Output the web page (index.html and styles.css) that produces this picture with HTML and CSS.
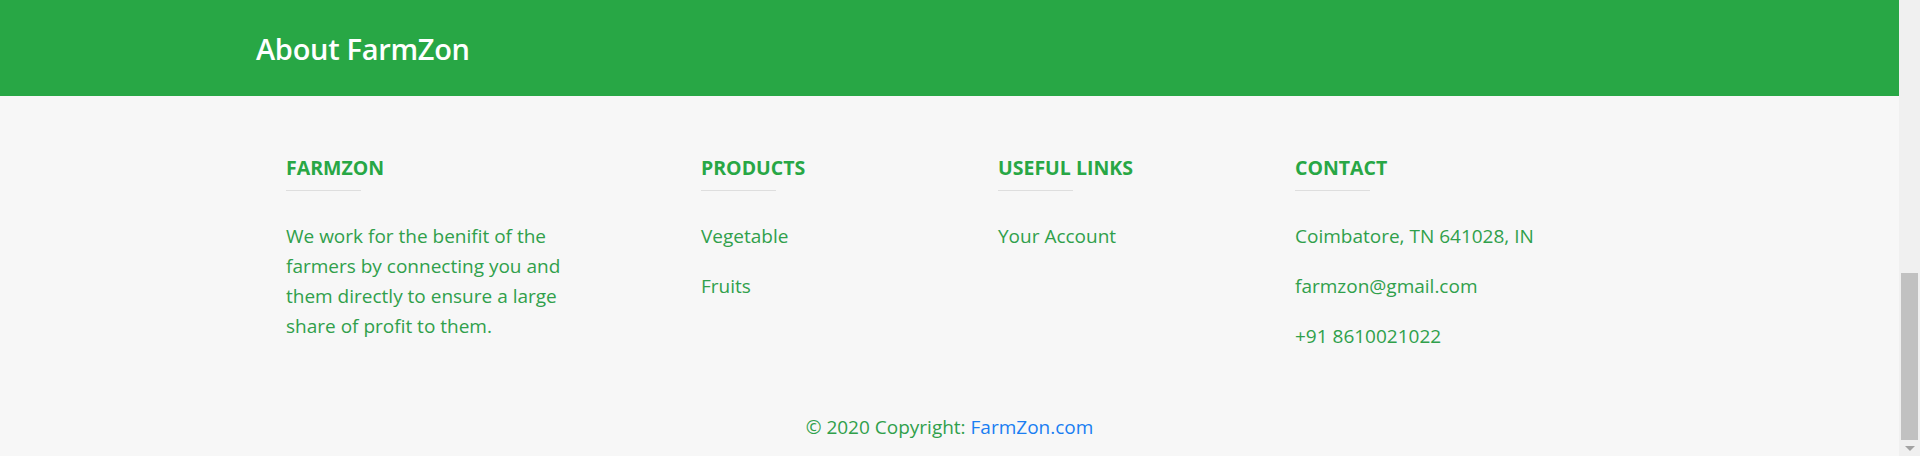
FILE: index.html
```html
<!DOCTYPE html>
<html lang="en">
<head>
<meta charset="utf-8">
<title>FarmZon - About</title>
<link rel="stylesheet" href="styles.css">
</head>
<body>
<div class="page">
  <div class="main">
    <header class="banner">
      <div class="container">
        <h1 class="banner-title">About FarmZon</h1>
      </div>
    </header>
    <footer class="footer">
      <div class="container">
        <div class="footer-grid">
          <section class="col">
            <h6 class="col-title">FarmZon</h6>
            <hr class="col-rule">
            <p class="about-text">We work for the benifit of the farmers by connecting you and them directly to ensure a large share of profit to them.</p>
          </section>
          <section class="col">
            <h6 class="col-title">Products</h6>
            <hr class="col-rule">
            <p class="item">Vegetable</p>
            <p class="item">Fruits</p>
          </section>
          <section class="col">
            <h6 class="col-title">Useful links</h6>
            <hr class="col-rule">
            <p class="item">Your Account</p>
          </section>
          <section class="col">
            <h6 class="col-title">Contact</h6>
            <hr class="col-rule">
            <p class="item">Coimbatore, TN 641028, IN</p>
            <p class="item">farmzon@gmail.com</p>
            <p class="item">+91 8610021022</p>
          </section>
        </div>
      </div>
      <div class="copyright">© 2020 Copyright: <a class="copyright-link" href="#">FarmZon.com</a></div>
    </footer>
  </div>
  <div class="scrollbar">
    <div class="scroll-track"><div class="scroll-thumb"></div></div>
    <div class="scroll-arrow"></div>
  </div>
</div>
</body>
</html>
```

FILE: styles.css
```css
* { box-sizing: border-box; }
html, body { margin: 0; padding: 0; height: 456px; overflow: hidden; }
body {
  font-family: "Open Sans", "Noto Sans", sans-serif;
  background: #f7f7f7;
}
.page {
  display: flex;
  height: 456px;
}
.main {
  flex: 1;
  min-width: 0;
  overflow: hidden;
}
.container {
  width: 1425px;
  margin: 0 auto;
  padding: 0 19px;
}
.banner {
  background: #28a745;
  height: 96px;
  display: flex;
  align-items: center;
}
.banner-title {
  margin: 0;
  color: #ffffff;
  font-size: 29px;
  font-weight: 600;
  line-height: 36px;
  letter-spacing: -0.3px;
  padding-top: 1px;
}
.footer {
  background: #f7f7f7;
  padding-top: 60px;
}
.footer-grid {
  display: grid;
  grid-template-columns: 415px 297px 297px 1fr;
  padding-left: 30px;
}
.col-title {
  margin: 0;
  font-size: 19.5px;
  font-weight: 700;
  line-height: 24px;
  text-transform: uppercase;
  color: #28a745;
}
.col-rule {
  width: 75px;
  margin: 10px 0 30px 0;
  border: 0;
  border-top: 1px solid #dedede;
  height: 0;
}
.about-text, .item {
  margin: 0 0 20px 0;
  font-size: 19px;
  line-height: 30px;
  color: #30a04b;
}
.about-text { width: 290px; }
.copyright {
  margin-top: 21px;
  padding: 20px 0;
  text-align: center;
  font-size: 19px;
  line-height: 30px;
  color: #30a04b;
}
.copyright-link {
  color: #1a7ef2;
  text-decoration: none;
}
.scrollbar {
  width: 21px;
  flex: none;
  background: #f0f0f0;
  display: flex;
  flex-direction: column;
  padding: 0 2px 0 2px;
}
.scroll-track {
  flex: 1;
  display: flex;
  flex-direction: column;
  justify-content: flex-end;
}
.scroll-thumb {
  height: 167px;
  background: #c1c1c1;
}
.scroll-arrow {
  height: 16px;
  display: flex;
  align-items: center;
  justify-content: center;
}
.scroll-arrow::before {
  content: "";
  width: 0;
  height: 0;
  border-left: 5px solid transparent;
  border-right: 5px solid transparent;
  border-top: 5px solid #a3a3a3;
}
```
